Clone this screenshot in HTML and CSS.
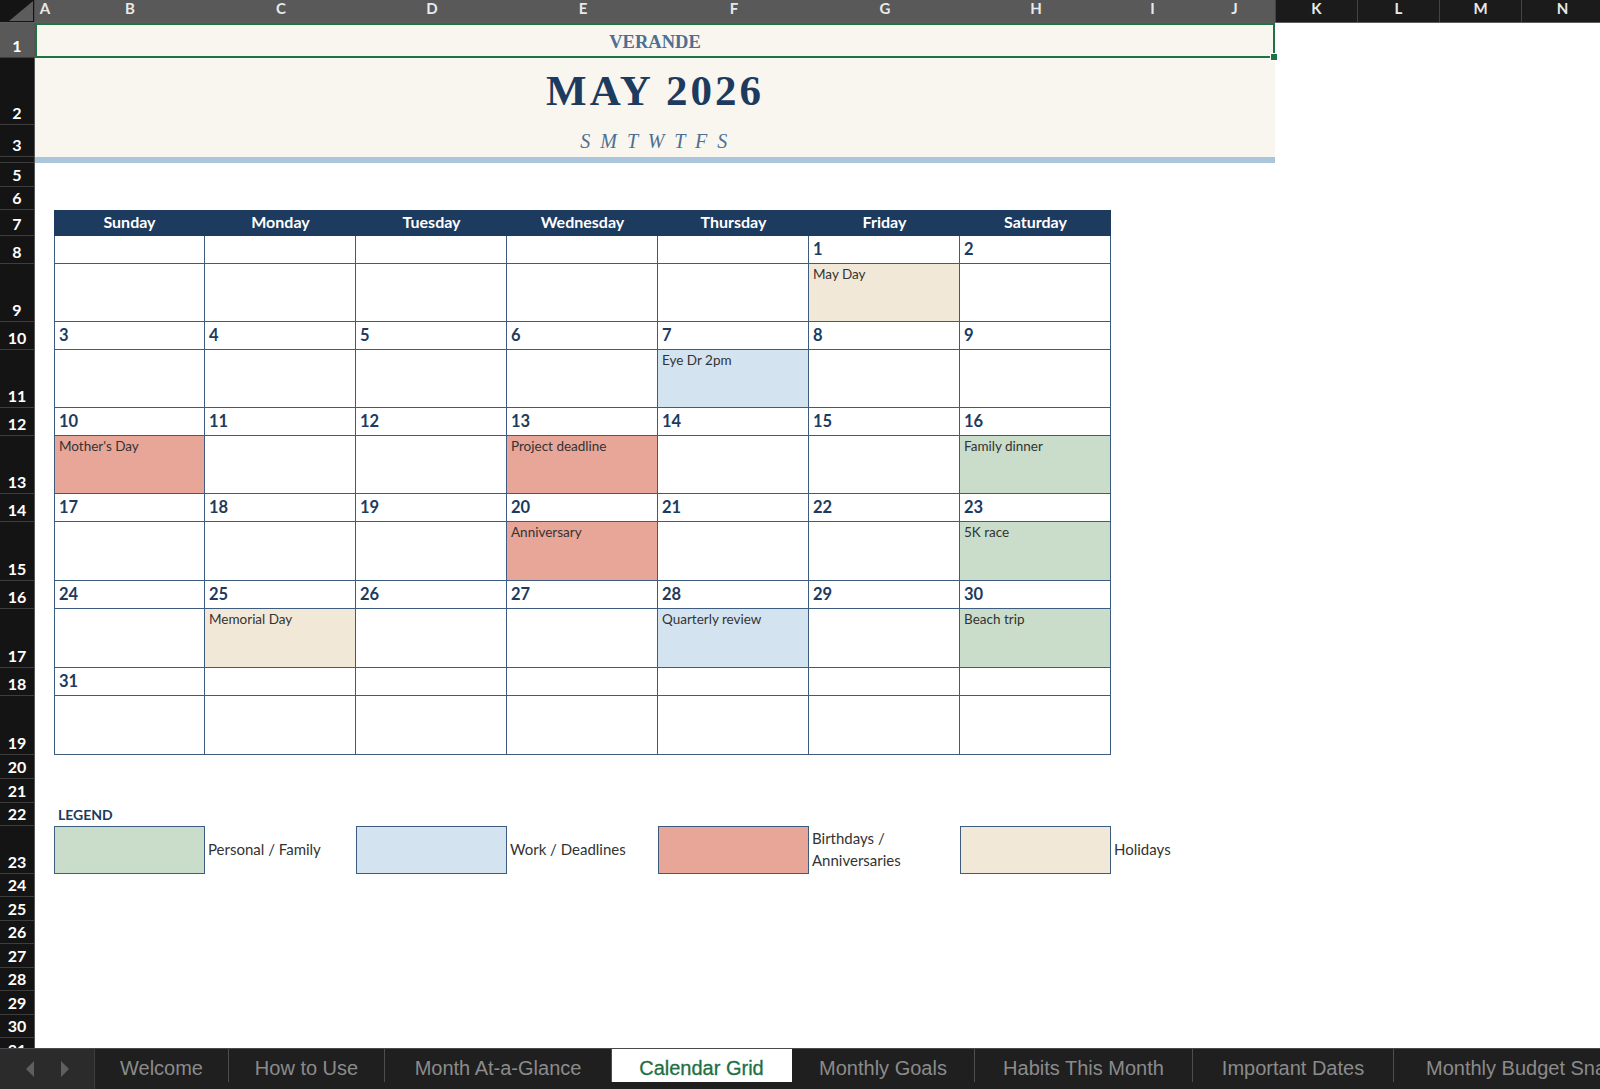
FILE: index.html
```html
<!DOCTYPE html>
<html lang="en">
<head>
<meta charset="utf-8">
<title>Calendar Grid</title>
<link rel="stylesheet" href="styles.css">
</head>
<body>
<div class="app">
  <div class="sheet">
    <div class="colbar">
      <div class="corner"><svg width="35" height="23" viewBox="0 0 35 23"><polygon points="33,1 33,21 9,21" fill="#5c5c5c"/></svg></div>
      <div class="ch sel w-a">A</div>
      <div class="ch sel w-b">B</div>
      <div class="ch sel w-b">C</div>
      <div class="ch sel w-b">D</div>
      <div class="ch sel w-b">E</div>
      <div class="ch sel w-b">F</div>
      <div class="ch sel w-b">G</div>
      <div class="ch sel w-b">H</div>
      <div class="ch sel w-n">I</div>
      <div class="ch sel w-n">J</div>
      <div class="ch w-n">K</div>
      <div class="ch w-n">L</div>
      <div class="ch w-n">M</div>
      <div class="ch w-n">N</div>
    </div>
    <div class="sheet-body">
      <div class="rowhdr">
        <div class="rh active">1</div>
        <div class="rh">2</div>
        <div class="rh">3</div>
        <div class="rh"></div>
        <div class="rh">5</div>
        <div class="rh">6</div>
        <div class="rh">7</div>
        <div class="rh">8</div>
        <div class="rh">9</div>
        <div class="rh">10</div>
        <div class="rh">11</div>
        <div class="rh">12</div>
        <div class="rh">13</div>
        <div class="rh">14</div>
        <div class="rh">15</div>
        <div class="rh">16</div>
        <div class="rh">17</div>
        <div class="rh">18</div>
        <div class="rh">19</div>
        <div class="rh">20</div>
        <div class="rh">21</div>
        <div class="rh">22</div>
        <div class="rh">23</div>
        <div class="rh">24</div>
        <div class="rh">25</div>
        <div class="rh">26</div>
        <div class="rh">27</div>
        <div class="rh">28</div>
        <div class="rh">29</div>
        <div class="rh">30</div>
        <div class="rh">31</div>
      </div>
      <div class="cells">
        <div class="banner">
          <div class="brand">VERANDE<span class="handle"></span></div>
          <div class="month">MAY 2026</div>
          <div class="dow">S M T W T F S</div>
        </div>
        <div class="rule"></div>

        <div class="cal">
          <div class="cal-head">
            <span>Sunday</span><span>Monday</span><span>Tuesday</span><span>Wednesday</span><span>Thursday</span><span>Friday</span><span>Saturday</span>
          </div>
          <!-- week 1 -->
          <div class="d"></div><div class="d"></div><div class="d"></div><div class="d"></div><div class="d"></div><div class="d">1</div><div class="d">2</div>
          <div class="e"></div><div class="e"></div><div class="e"></div><div class="e"></div><div class="e"></div><div class="e hol">May Day</div><div class="e"></div>
          <!-- week 2 -->
          <div class="d">3</div><div class="d">4</div><div class="d">5</div><div class="d">6</div><div class="d">7</div><div class="d">8</div><div class="d">9</div>
          <div class="e"></div><div class="e"></div><div class="e"></div><div class="e"></div><div class="e work">Eye Dr 2pm</div><div class="e"></div><div class="e"></div>
          <!-- week 3 -->
          <div class="d">10</div><div class="d">11</div><div class="d">12</div><div class="d">13</div><div class="d">14</div><div class="d">15</div><div class="d">16</div>
          <div class="e bday">Mother's Day</div><div class="e"></div><div class="e"></div><div class="e bday">Project deadline</div><div class="e"></div><div class="e"></div><div class="e pers">Family dinner</div>
          <!-- week 4 -->
          <div class="d">17</div><div class="d">18</div><div class="d">19</div><div class="d">20</div><div class="d">21</div><div class="d">22</div><div class="d">23</div>
          <div class="e"></div><div class="e"></div><div class="e"></div><div class="e bday">Anniversary</div><div class="e"></div><div class="e"></div><div class="e pers">5K race</div>
          <!-- week 5 -->
          <div class="d">24</div><div class="d">25</div><div class="d">26</div><div class="d">27</div><div class="d">28</div><div class="d">29</div><div class="d">30</div>
          <div class="e"></div><div class="e hol">Memorial Day</div><div class="e"></div><div class="e"></div><div class="e work">Quarterly review</div><div class="e"></div><div class="e pers">Beach trip</div>
          <!-- week 6 -->
          <div class="d">31</div><div class="d"></div><div class="d"></div><div class="d"></div><div class="d"></div><div class="d"></div><div class="d"></div>
          <div class="e"></div><div class="e"></div><div class="e"></div><div class="e"></div><div class="e"></div><div class="e"></div><div class="e"></div>
        </div>

        <div class="legend-title">LEGEND</div>
        <div class="legend">
          <div class="swatch pers"></div><div class="lbl">Personal / Family</div>
          <div class="swatch work"></div><div class="lbl">Work / Deadlines</div>
          <div class="swatch bday"></div><div class="lbl">Birthdays / Anniversaries</div>
          <div class="swatch hol"></div><div class="lbl">Holidays</div>
        </div>
      </div>
    </div>
  </div>

  <div class="tabs">
    <div class="nav">
      <svg width="12" height="18" viewBox="0 0 12 18"><polygon points="10,1 10,17 2,9" fill="#5f5f5f"/></svg>
      <svg width="12" height="18" viewBox="0 0 12 18"><polygon points="2,1 2,17 10,9" fill="#5f5f5f"/></svg>
    </div>
    <div class="tab tab-welcome">Welcome</div>
    <div class="tab tab-howto">How to Use</div>
    <div class="tab tab-month">Month At-a-Glance</div>
    <div class="tab tab-cal current">Calendar Grid</div>
    <div class="tab tab-goals">Monthly Goals</div>
    <div class="tab tab-habits">Habits This Month</div>
    <div class="tab tab-dates">Important Dates</div>
    <div class="tab tab-budget">Monthly Budget Snapshot</div>
  </div>
</div>
</body>
</html>
```

FILE: styles.css
```css
:root {
  --rows: 35px 67px 32px 6px 24px 23px 26px 28px 58px 28px 58px 28px 58px 28px 59px 28px 59px 28px 59px 24px 24px 23px 48px 23px 24px 23px 24px 23px 24px 23px 24px;
  --navy: #1d3a5f;
  --line: #3e5c80;
  --cream: #f9f6ef;
  --green: #1f7244;
}

* { box-sizing: border-box; }

html, body {
  margin: 0;
  padding: 0;
  background: #ffffff;
}

body {
  font-family: Lato, "Open Sans", sans-serif;
}

.app {
  width: 1600px;
  height: 1089px;
  overflow: hidden;
  display: flex;
  flex-direction: column;
}

.sheet {
  height: 1048px;
  flex: none;
  overflow: hidden;
  display: flex;
  flex-direction: column;
}

/* column header bar */
.colbar {
  display: flex;
  height: 23px;
  flex: none;
  background: #1b1b1b;
  border-bottom: 1px solid #5e5e5e;
}

.corner {
  width: 35px;
  flex: none;
  background: #141414;
  border-right: 1px solid #4a4a4a;
}
.corner svg { display: block; }

.ch {
  flex: none;
  color: #e9e9e9;
  font-weight: 700;
  font-size: 15px;
  line-height: 16px;
  text-align: center;
  border-left: 1px solid #444;
}
.ch.sel {
  background: #595959;
  border-left-color: #595959;
}
.w-a { width: 19px; }
.w-b { width: 151px; }
.w-n { width: 82px; }

/* sheet body */
.sheet-body {
  display: flex;
  flex: 1;
  min-height: 0;
}

.rowhdr {
  width: 35px;
  flex: none;
  display: grid;
  grid-template-rows: var(--rows);
  background: #141414;
  border-right: 1px solid #555;
}

.rh {
  overflow: hidden;
  display: flex;
  align-items: flex-end;
  justify-content: center;
  padding-bottom: 3px;
  color: #ffffff;
  font-weight: 700;
  font-size: 16px;
  line-height: 1;
  border-bottom: 1px solid #3d3d3d;
}
.rh.active { background: #595959; }

.cells {
  display: grid;
  grid-template-columns: 19px repeat(7, 151px) repeat(6, 82px);
  grid-template-rows: var(--rows);
  flex: none;
}

/* banner */
.banner {
  grid-column: 1 / 11;
  grid-row: 1 / 4;
  background: var(--cream);
  display: grid;
  grid-template-rows: 35px 67px 32px;
}

.brand {
  position: relative;
  border: 2px solid var(--green);
  display: flex;
  align-items: center;
  justify-content: center;
  padding-top: 3px;
  font-family: "Liberation Serif", serif;
  font-weight: 700;
  font-size: 18.5px;
  color: #4d6f93;
}

.handle {
  position: absolute;
  right: -5px;
  bottom: -5px;
  width: 8px;
  height: 8px;
  background: var(--green);
  border: 1px solid #ffffff;
}

.month {
  display: flex;
  align-items: center;
  justify-content: center;
  font-family: "Liberation Serif", serif;
  font-weight: 700;
  font-size: 43px;
  letter-spacing: 3px;
  color: var(--navy);
  padding-bottom: 3px;
}

.dow {
  display: flex;
  align-items: center;
  justify-content: center;
  font-family: "Liberation Serif", serif;
  font-style: italic;
  font-size: 20px;
  letter-spacing: 2.5px;
  color: #4d6f93;
}

.rule {
  grid-column: 1 / 11;
  grid-row: 4;
  background: #abc5dc;
}

/* calendar */
.cal {
  grid-column: 2 / 9;
  grid-row: 7 / 20;
  display: grid;
  grid-template-columns: repeat(7, 151px);
  grid-template-rows: 26px repeat(3, 28px 58px) repeat(3, 28px 59px);
}

.cal-head {
  grid-column: 1 / -1;
  display: grid;
  grid-template-columns: repeat(7, 1fr);
  background: var(--navy);
  color: #ffffff;
  font-weight: 700;
  font-size: 16px;
  align-items: center;
  text-align: center;
  padding-bottom: 3px;
}

.d, .e {
  border-right: 1px solid var(--line);
  border-bottom: 1px solid var(--line);
  background: #ffffff;
}
.cal > div:nth-child(7n+2) { border-left: 1px solid var(--line); }

.d {
  display: flex;
  align-items: center;
  padding: 0 0 1px 4px;
  font-weight: 700;
  font-size: 16.5px;
  color: var(--navy);
}

.e {
  padding: 2px 4px 0 4px;
  font-size: 13.5px;
  line-height: 17px;
  color: #333333;
}

.hol { background: #f2e8d7; }
.work { background: #d4e3f0; }
.bday { background: #e8a698; }
.pers { background: #c9ddca; }

/* legend */
.legend-title {
  grid-column: 2;
  grid-row: 22;
  display: flex;
  align-items: flex-end;
  padding: 0 0 3px 4px;
  font-weight: 700;
  font-size: 14px;
  color: var(--navy);
}

.legend {
  grid-column: 2 / 11;
  grid-row: 23;
  display: grid;
  grid-template-columns: repeat(7, 151px) 82px;
}

.swatch {
  border: 1px solid var(--line);
}

.lbl {
  display: flex;
  align-items: center;
  padding-left: 3px;
  padding-bottom: 2px;
  font-size: 15px;
  line-height: 22px;
  color: #333333;
  white-space: normal;
}
.lbl:last-child { white-space: nowrap; }

/* sheet tabs */
.tabs {
  height: 41px;
  flex: none;
  display: flex;
  background: #1f1f1f;
  border-top: 1px solid #4a4a4a;
  font-family: "Liberation Sans", Arial, sans-serif;
  font-size: 20px;
  white-space: nowrap;
}

.nav {
  width: 95px;
  flex: none;
  background: #2b2b2b;
  border-right: 1px solid #3e3e3e;
  display: flex;
  align-items: center;
  justify-content: center;
  gap: 23px;
}
.nav svg { display: block; }

.tab {
  height: 33px;
  flex: none;
  display: flex;
  align-items: center;
  justify-content: center;
  padding-top: 5px;
  color: #8b8b8b;
  border-right: 1px solid #4e4e4e;
}

.tab-welcome { width: 134px; }
.tab-howto { width: 156px; }
.tab-month { width: 227px; }
.tab-cal { width: 180px; }
.tab-goals { width: 183px; }
.tab-habits { width: 218px; }
.tab-dates { width: 201px; }
.tab-budget { justify-content: flex-start; padding-left: 32px; border-right: none; }

.tab.current {
  background: #ffffff;
  color: #1d7044;
  -webkit-text-stroke: 0.3px #1d7044;
  border-right-color: #ffffff;
}
```
